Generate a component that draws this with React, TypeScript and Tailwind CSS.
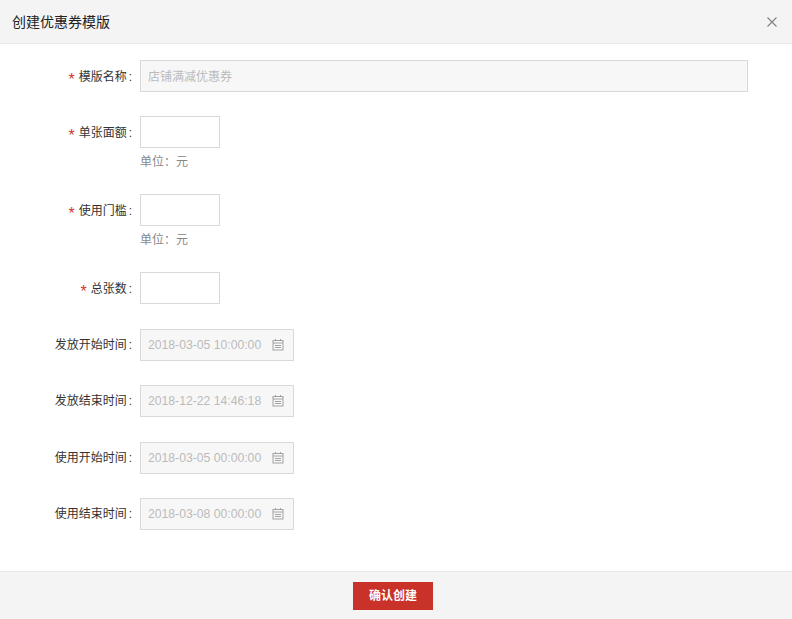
import React from "react";

const font = "font-['Liberation_Sans','Noto_Sans_CJK_SC',sans-serif]";

function Label({ text, required, lift }: { text: string; required?: boolean; lift?: boolean }) {
  return (
    <div className={`w-[132px] h-8 mr-2 flex items-center justify-end text-xs text-[#333] shrink-0 ${lift ? "" : "pt-px"}`}>
      {required && <span className="text-[#d0392b] mr-[4px] text-base leading-none mt-[7px]">*</span>}
      <span>{text}</span>
      <span className="ml-[2px]">:</span>
    </div>
  );
}

function Calendar() {
  return (
    <svg width="12" height="12" viewBox="0 0 12 12" fill="none" stroke="#9a9a9a" strokeWidth="0.9" className="shrink-0">
      <rect x="1" y="1.5" width="10" height="9.5" />
      <path d="M1 4H11M3.5 0V2M8.5 0V2M3 6.5H9M3 8.5H9" />
    </svg>
  );
}

function MoneyRow({ label, help }: { label: string; help?: boolean }) {
  return (
    <div className="flex mb-6">
      <Label text={label} required />
      <div>
        <div className="w-20 h-8 border border-[#d9d9d9] bg-white" />
        {help && <div className="h-[22px] pt-[5px] flex items-center text-xs text-[#888]">单位：元</div>}
      </div>
    </div>
  );
}

function DateRow({ label, value, cls }: { label: string; value: string; cls: string }) {
  return (
    <div className={`flex ${cls}`}>
      <Label text={label} lift />
      <div className="w-[154px] h-8 border border-[#d9d9d9] bg-[#f7f7f7] flex items-center justify-between pl-[7px] pr-[9px] text-[12.2px] text-[#bbb]">
        <span>{value}</span>
        <Calendar />
      </div>
    </div>
  );
}

export default function App() {
  return (
    <div className={`w-[792px] h-[619px] bg-white flex flex-col overflow-hidden ${font}`}>
      <header className="h-11 shrink-0 bg-[#f4f4f4] border-b border-[#e8e8e8] flex items-center justify-between pl-3 pr-[15px]">
        <h1 className="text-sm text-[#222] font-normal">创建优惠券模版</h1>
        <svg width="10" height="10" viewBox="0 0 10 10" stroke="#808080" strokeWidth="1.1" fill="none">
          <path d="M0.5 0.5L9.5 9.5M9.5 0.5L0.5 9.5" />
        </svg>
      </header>
      <main className="flex-1 pt-4">
        <div className="flex mb-6">
          <Label text="模版名称" required />
          <div className="w-[608px] h-8 border border-[#d9d9d9] bg-[#f7f7f7] flex items-center pl-[7px] pt-px text-xs text-[#bbb]">
            店铺满减优惠券
          </div>
        </div>
        <MoneyRow label="单张面额" help />
        <MoneyRow label="使用门槛" help />
        <div className="flex mb-[25px]">
          <Label text="总张数" required />
          <div className="w-20 h-8 border border-[#d9d9d9] bg-white" />
        </div>
        <DateRow label="发放开始时间" value="2018-03-05 10:00:00" cls="mb-6" />
        <DateRow label="发放结束时间" value="2018-12-22 14:46:18" cls="mb-[25px]" />
        <DateRow label="使用开始时间" value="2018-03-05 00:00:00" cls="mb-6" />
        <DateRow label="使用结束时间" value="2018-03-08 00:00:00" cls="" />
      </main>
      <footer className="h-12 shrink-0 bg-[#f4f4f4] border-t border-[#e8e8e8] flex justify-center pt-[10px] pr-[6px]">
        <button className="w-20 h-7 bg-[#c83228] text-white text-xs font-bold">确认创建</button>
      </footer>
    </div>
  );
}
